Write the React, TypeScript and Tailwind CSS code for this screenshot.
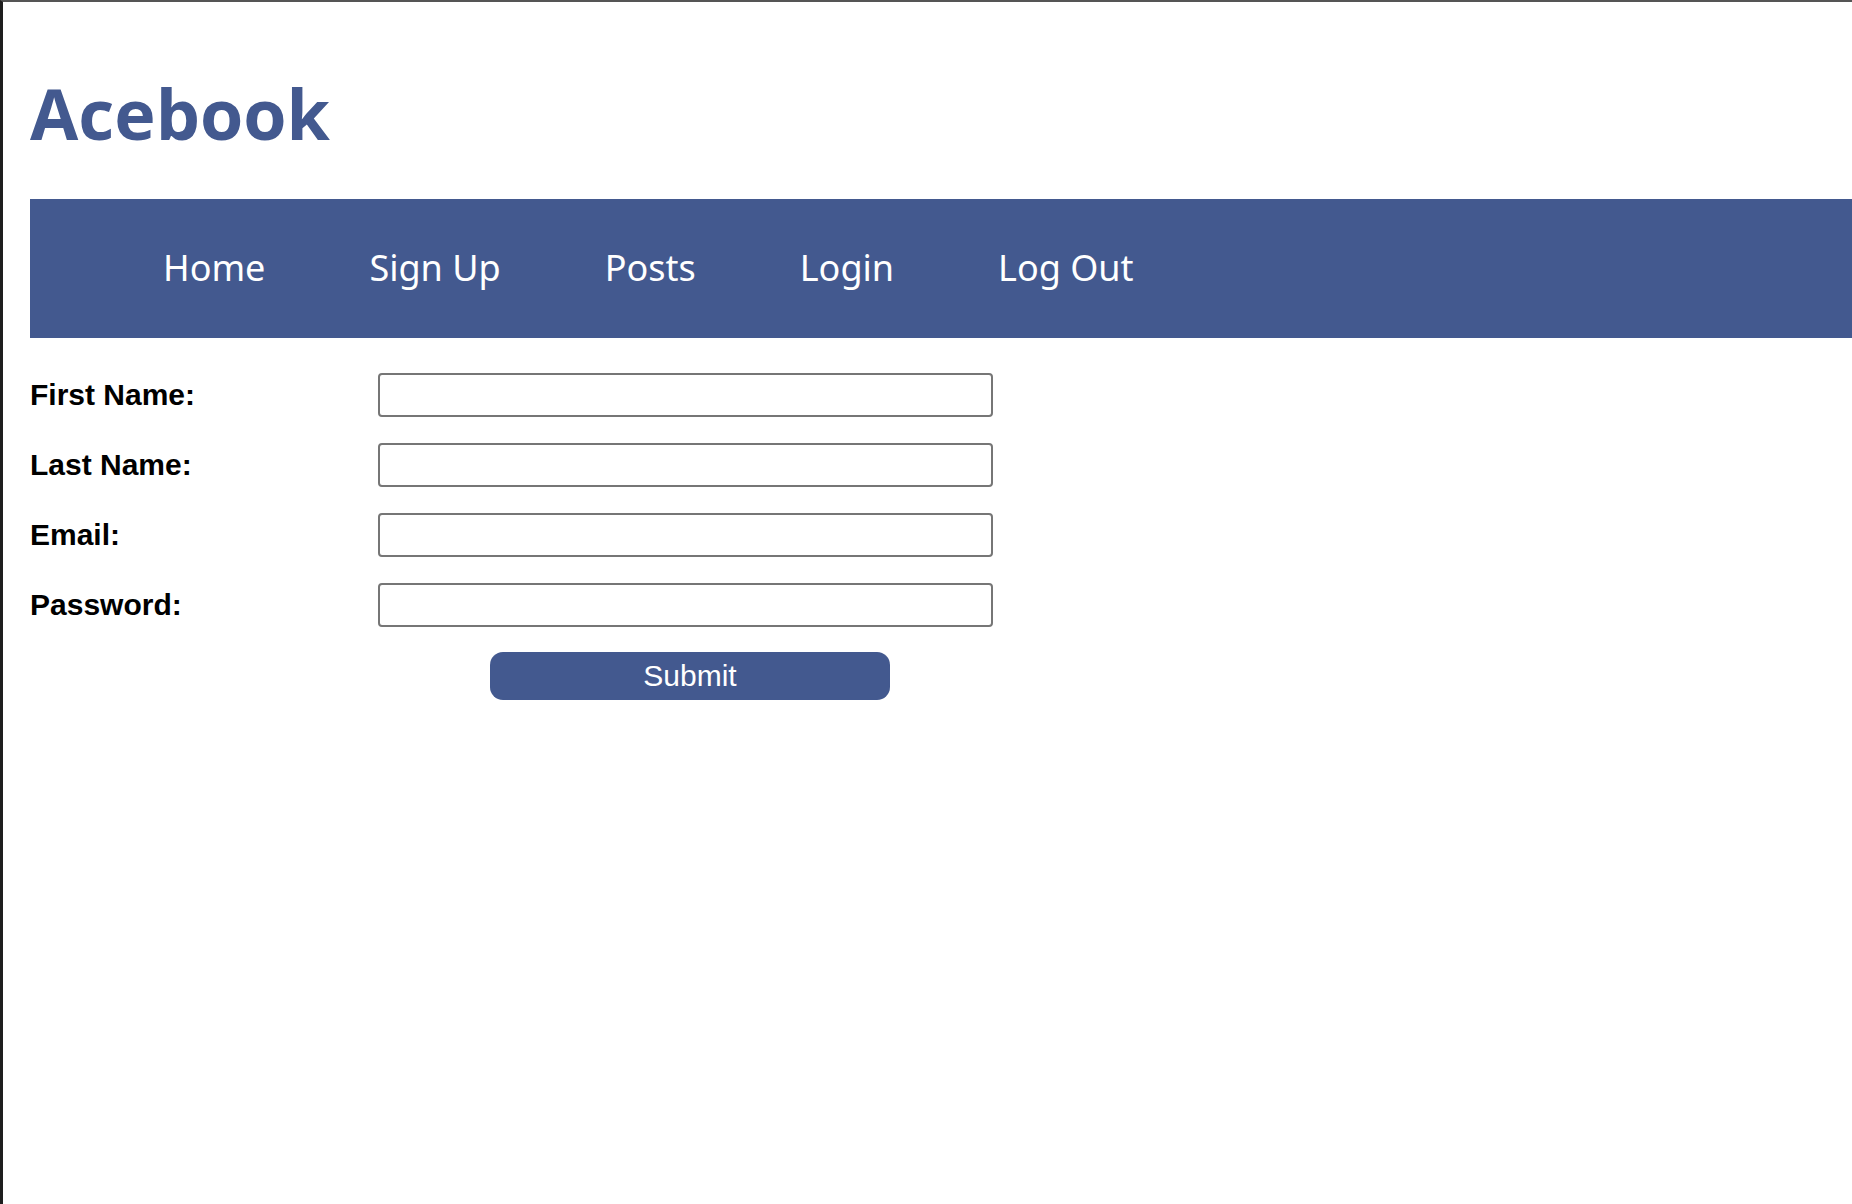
import React from "react";

const links = ["Home", "Sign Up", "Posts", "Login", "Log Out"];

const fields = [
  { label: "First Name:", type: "text", name: "first_name" },
  { label: "Last Name:", type: "text", name: "last_name" },
  { label: "Email:", type: "email", name: "email" },
  { label: "Password:", type: "password", name: "password" },
];

export default function App() {
  return (
    <div className="min-h-screen bg-white border-l-[3px] border-l-[#1e1e1e] border-t-2 border-t-[#555555] pl-[27px]">
      <h1 className="mt-[76px] text-[70px] leading-[70px] font-bold text-[#43598f] font-['Open_Sans',sans-serif]">
        Acebook
      </h1>

      {/* Nav bar runs off the right edge */}
      <nav className="mt-[51px] h-[139px] pb-[2px] bg-[#43598f] flex items-center pl-[133px] gap-[104px] font-['Noto_Sans',sans-serif]">
        {links.map((link) => (
          <a key={link} href="#" className="text-white text-[36px] leading-none">
            {link}
          </a>
        ))}
      </nav>

      <form className="mt-[35px] flex flex-col gap-[26px] font-['Liberation_Sans',Arial,sans-serif]">
        {fields.map((field) => (
          <div key={field.name} className="flex items-center">
            <label
              htmlFor={field.name}
              className="w-[348px] text-[30px] font-bold text-black leading-none"
            >
              {field.label}
            </label>
            <input
              id={field.name}
              type={field.type}
              className="w-[615px] h-[44px] border-2 border-[#767676] rounded-[4px] bg-white"
            />
          </div>
        ))}
        <div className="pl-[460px] -mt-px">
          <button
            type="submit"
            className="w-[400px] h-[48px] rounded-[13px] bg-[#43598f] text-white text-[30px] leading-none"
          >
            Submit
          </button>
        </div>
      </form>
    </div>
  );
}
